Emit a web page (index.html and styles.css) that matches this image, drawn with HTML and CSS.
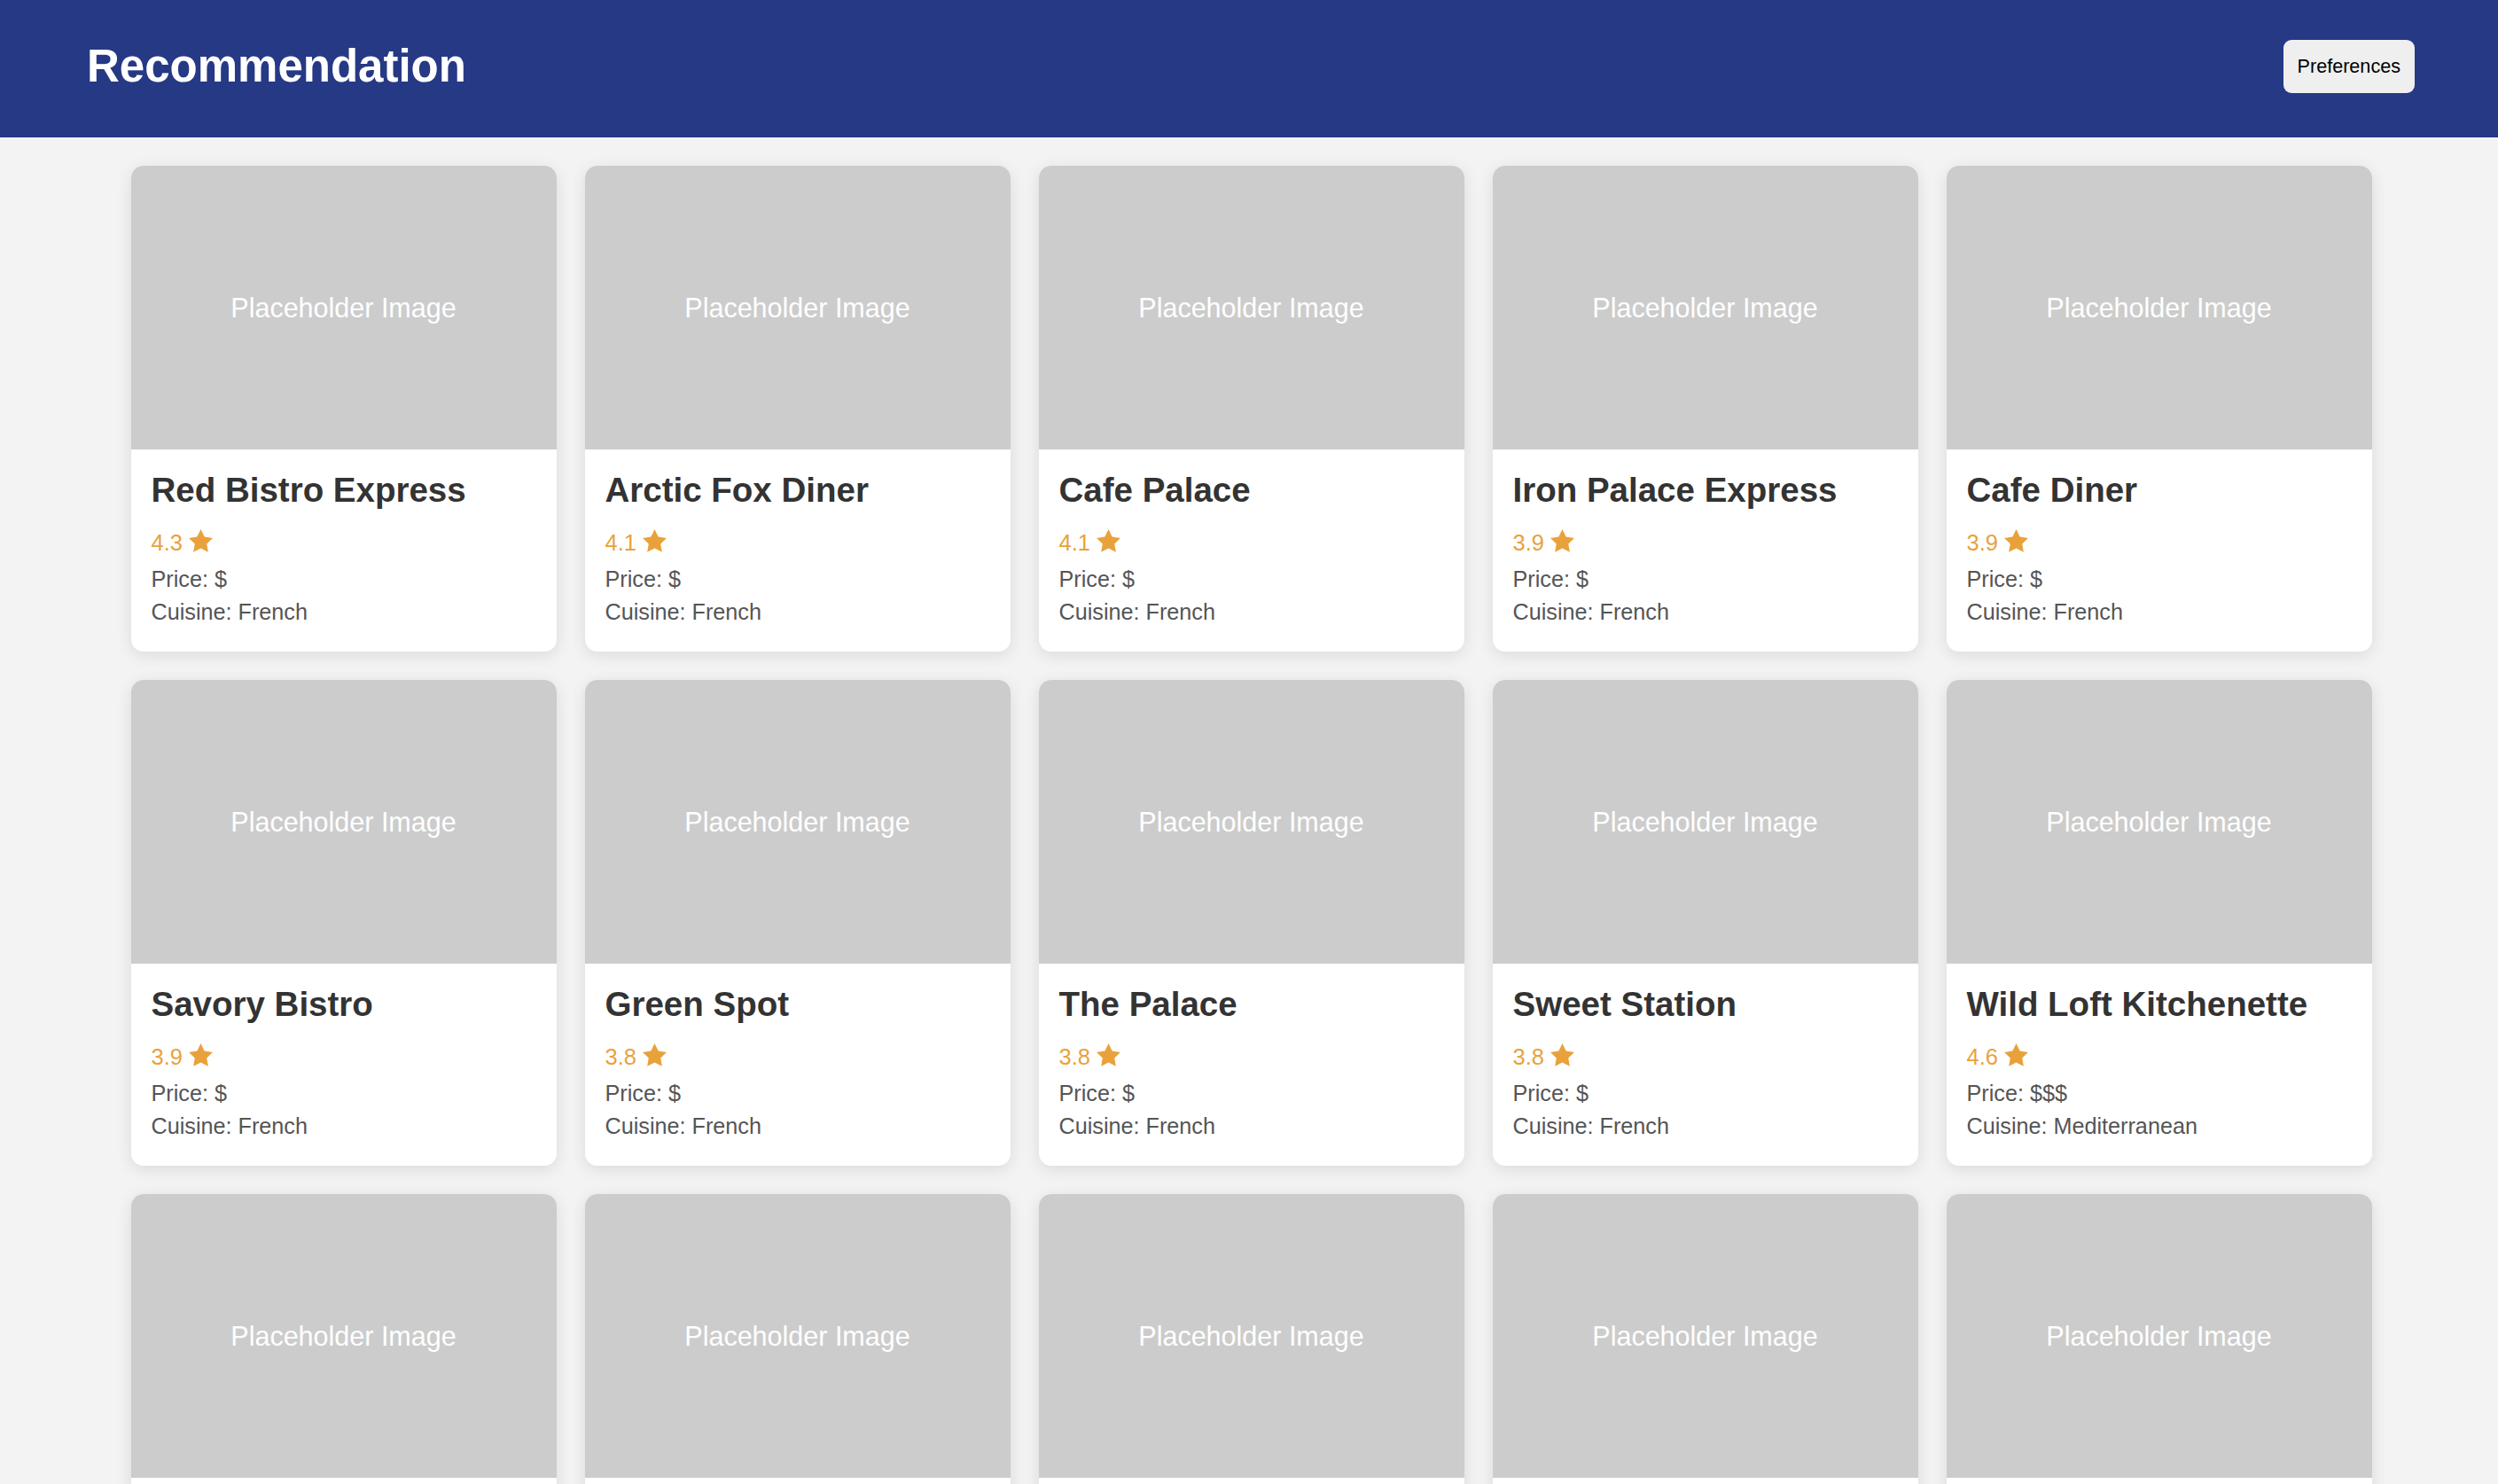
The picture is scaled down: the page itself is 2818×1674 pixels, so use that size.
FILE: index.html
```html
<!DOCTYPE html>
<html lang="en">
<head>
  <meta charset="UTF-8" />
  <meta name="viewport" content="width=device-width, initial-scale=1.0" />
  <title>Recommendation</title>
  <link rel="stylesheet" href="styles.css">
</head>
<body>

<header class="topbar">
  <h1>Recommendation</h1>
  <button class="pref-btn">Preferences</button>
</header>

<main class="grid" id="grid"></main>

<script>
const restaurants = [
  { name: "Red Bistro Express", rating: 4.3, price: "$", cuisine: "French" },
  { name: "Arctic Fox Diner", rating: 4.1, price: "$", cuisine: "French" },
  { name: "Cafe Palace", rating: 4.1, price: "$", cuisine: "French" },
  { name: "Iron Palace Express", rating: 3.9, price: "$", cuisine: "French" },
  { name: "Cafe Diner", rating: 3.9, price: "$", cuisine: "French" },
  { name: "Savory Bistro", rating: 3.9, price: "$", cuisine: "French" },
  { name: "Green Spot", rating: 3.8, price: "$", cuisine: "French" },
  { name: "The Palace", rating: 3.8, price: "$", cuisine: "French" },
  { name: "Sweet Station", rating: 3.8, price: "$", cuisine: "French" },
  { name: "Wild Loft Kitchenette", rating: 4.6, price: "$$$", cuisine: "Mediterranean" },
  { name: "Golden Corner", rating: 3.7, price: "$", cuisine: "French" },
  { name: "Blue Bistro", rating: 3.7, price: "$", cuisine: "French" },
  { name: "Urban Table", rating: 3.6, price: "$", cuisine: "French" },
  { name: "Little Harbor", rating: 3.6, price: "$", cuisine: "French" },
  { name: "Sunny Grill", rating: 4.4, price: "$$", cuisine: "Italian" }
];

const star = '<svg class="star" viewBox="2 2 20 19.1"><path d="M12 2l3.09 6.26L22 9.27l-5 4.87 1.18 6.88L12 17.77l-6.18 3.25L7 14.14 2 9.27l6.91-1.01L12 2z"/></svg>';

const grid = document.getElementById("grid");
restaurants.forEach(r => {
  const card = document.createElement("div");
  card.className = "card";
  card.innerHTML =
    '<div class="thumb">Placeholder Image</div>' +
    '<div class="card-body">' +
      '<h3>' + r.name + '</h3>' +
      '<div class="rating">' + r.rating.toFixed(1) + ' ' + star + '</div>' +
      '<div class="info">Price: ' + r.price + '</div>' +
      '<div class="info cuisine">Cuisine: ' + r.cuisine + '</div>' +
    '</div>';
  grid.appendChild(card);
});
</script>

</body>
</html>
```

FILE: styles.css
```css
body {
  font-family: "Liberation Sans", Arial, sans-serif;
  background-color: #f3f3f3;
  margin: 0;
}

.topbar {
  box-sizing: border-box;
  height: 155px;
  padding: 0 94px 6px 98px;
  background-color: #263985;
  display: flex;
  align-items: center;
  justify-content: space-between;
}

.topbar h1 {
  margin: 0 0 1px;
  color: #fff;
  font-size: 51px;
  font-weight: bold;
}

.pref-btn {
  font-family: "Liberation Sans", Arial, sans-serif;
  font-size: 21.6px;
  color: #000;
  background-color: #efefef;
  border: none;
  border-radius: 9px;
  padding: 17px 16px;
  cursor: pointer;
}

.grid {
  display: grid;
  grid-template-columns: repeat(5, 480px);
  justify-content: center;
  gap: 32px;
  padding: 32px 0 32px 5px;
}

.card {
  background: #fff;
  border-radius: 14px;
  overflow: hidden;
  box-shadow: 0 4px 18px rgba(0, 0, 0, 0.1);
}

.thumb {
  height: 320px;
  background-color: #cccccc;
  color: #fff;
  font-size: 30.5px;
  display: flex;
  align-items: center;
  justify-content: center;
}

.card-body {
  padding: 24px 23px 30px;
}

.card-body h3 {
  margin: 0 0 22px;
  font-size: 38.5px;
  font-weight: bold;
  color: #333;
}

.rating {
  font-size: 25.5px;
  line-height: 29px;
  color: #e9a23b;
}

.star {
  width: 27px;
  height: 26px;
  fill: #e9a23b;
  vertical-align: -2px;
}

.info {
  margin-top: 12px;
  font-size: 25.2px;
  line-height: 29px;
  color: #555;
}

.info.cuisine {
  margin-top: 8px;
}
```
